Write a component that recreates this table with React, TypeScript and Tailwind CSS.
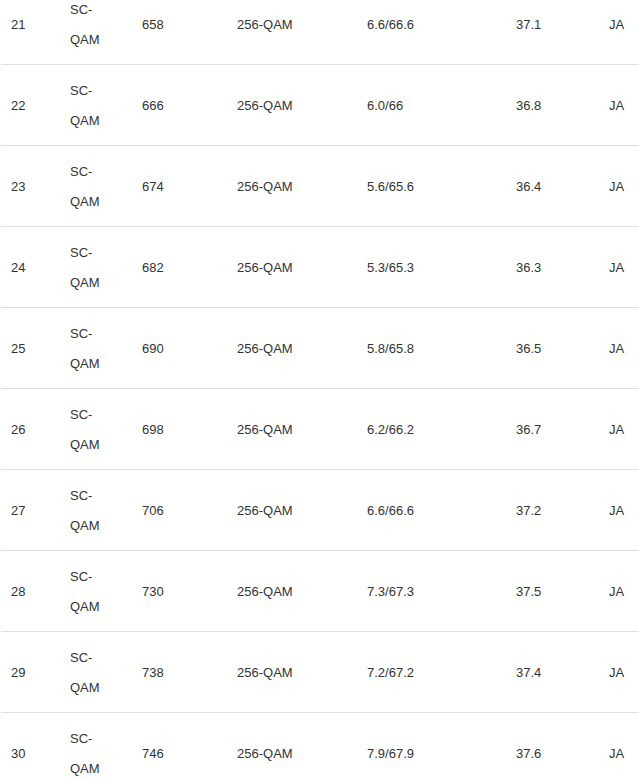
import React from 'react';

type Channel = {
  id: number;
  type: string;
  freq: number;
  mod: string;
  power: string;
  snr: string;
  locked: string;
};

const channels: Channel[] = [
  { id: 21, type: 'SC-QAM', freq: 658, mod: '256-QAM', power: '6.6/66.6', snr: '37.1', locked: 'JA' },
  { id: 22, type: 'SC-QAM', freq: 666, mod: '256-QAM', power: '6.0/66', snr: '36.8', locked: 'JA' },
  { id: 23, type: 'SC-QAM', freq: 674, mod: '256-QAM', power: '5.6/65.6', snr: '36.4', locked: 'JA' },
  { id: 24, type: 'SC-QAM', freq: 682, mod: '256-QAM', power: '5.3/65.3', snr: '36.3', locked: 'JA' },
  { id: 25, type: 'SC-QAM', freq: 690, mod: '256-QAM', power: '5.8/65.8', snr: '36.5', locked: 'JA' },
  { id: 26, type: 'SC-QAM', freq: 698, mod: '256-QAM', power: '6.2/66.2', snr: '36.7', locked: 'JA' },
  { id: 27, type: 'SC-QAM', freq: 706, mod: '256-QAM', power: '6.6/66.6', snr: '37.2', locked: 'JA' },
  { id: 28, type: 'SC-QAM', freq: 730, mod: '256-QAM', power: '7.3/67.3', snr: '37.5', locked: 'JA' },
  { id: 29, type: 'SC-QAM', freq: 738, mod: '256-QAM', power: '7.2/67.2', snr: '37.4', locked: 'JA' },
  { id: 30, type: 'SC-QAM', freq: 746, mod: '256-QAM', power: '7.9/67.9', snr: '37.6', locked: 'JA' },
];

const cell = 'px-[10px] pt-[11px] pb-[9px] align-middle';

export default function App() {
  return (
    <div className="w-[639px] h-[778px] overflow-hidden bg-white pl-px">
      <table
        className="-mt-[16px] w-[638px] table-fixed border-collapse text-[13px] leading-[30px] text-[#333]"
        style={{ fontFamily: '"Liberation Sans", Arial, sans-serif' }}
      >
        <colgroup>
          <col className="w-[59px]" />
          <col className="w-[72px]" />
          <col className="w-[95px]" />
          <col className="w-[130px]" />
          <col className="w-[149px]" />
          <col className="w-[93px]" />
          <col />
        </colgroup>
        <tbody>
          {channels.map((ch) => (
            <tr key={ch.id} className="border-b border-[#ddd]">
              <td className={cell}>{ch.id}</td>
              <td className="pl-[10px] pr-[16px] pt-[11px] pb-[9px] align-middle">{ch.type}</td>
              <td className={cell}>{ch.freq}</td>
              <td className={cell}>{ch.mod}</td>
              <td className={cell}>{ch.power}</td>
              <td className={cell}>{ch.snr}</td>
              <td className={cell}>{ch.locked}</td>
            </tr>
          ))}
        </tbody>
      </table>
    </div>
  );
}
